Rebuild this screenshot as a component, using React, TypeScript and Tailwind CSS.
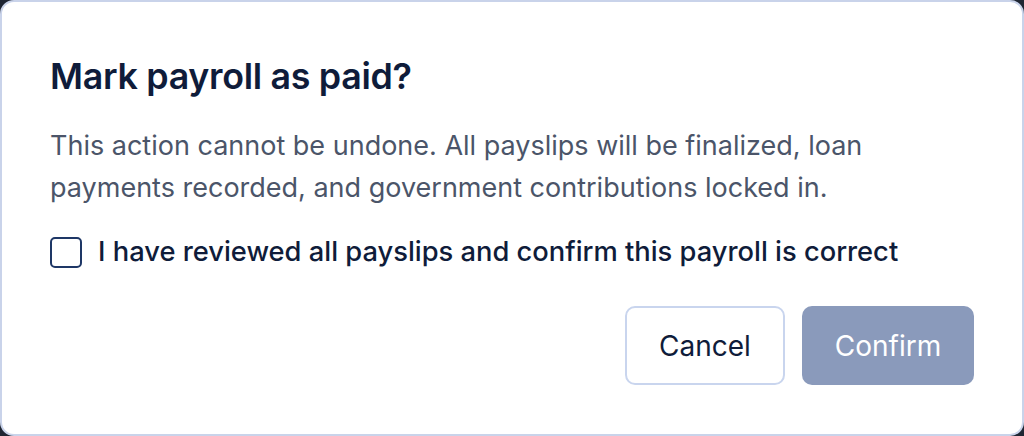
import React from "react";

export default function App() {
  return (
    <div className="w-[1024px] h-[436px] bg-[#1f2633]" style={{ fontFamily: "Inter, 'Noto Sans', sans-serif" }}>
      <div className="w-full h-full rounded-[14px] border-2 border-[#c9d3ea] bg-white pl-[48px] pr-[48px] pt-[52px] flex flex-col">
        <h2 className="text-[35.8px] leading-[44px] font-semibold text-[#0f1c3a] tracking-[-0.3px]">Mark payroll as paid?</h2>
        <p className="mt-[27px] text-[27px] leading-[42px] text-[#4b5569] w-[900px]">
          This action cannot be undone. All payslips will be finalized, loan payments recorded, and government contributions locked in.
        </p>
        <label className="mt-[25px] flex items-center gap-[16px]">
          <span className="w-[32px] h-[31px] rounded-[5px] border-2 border-[#1e3766] bg-white shrink-0" />
          <span className="text-[27.3px] leading-[36px] font-medium text-[#0f1c3a]">I have reviewed all payslips and confirm this payroll is correct</span>
        </label>
        <div className="mt-[36px] flex justify-end gap-[17px]">
          <button className="w-[160px] h-[79px] rounded-[10px] border-2 border-[#c9d5ee] bg-white text-[28px] text-[#0f1c3a]">Cancel</button>
          <button className="w-[172px] h-[79px] rounded-[10px] bg-[#8a9abb] text-[28px] text-white">Confirm</button>
        </div>
      </div>
    </div>
  );
}
